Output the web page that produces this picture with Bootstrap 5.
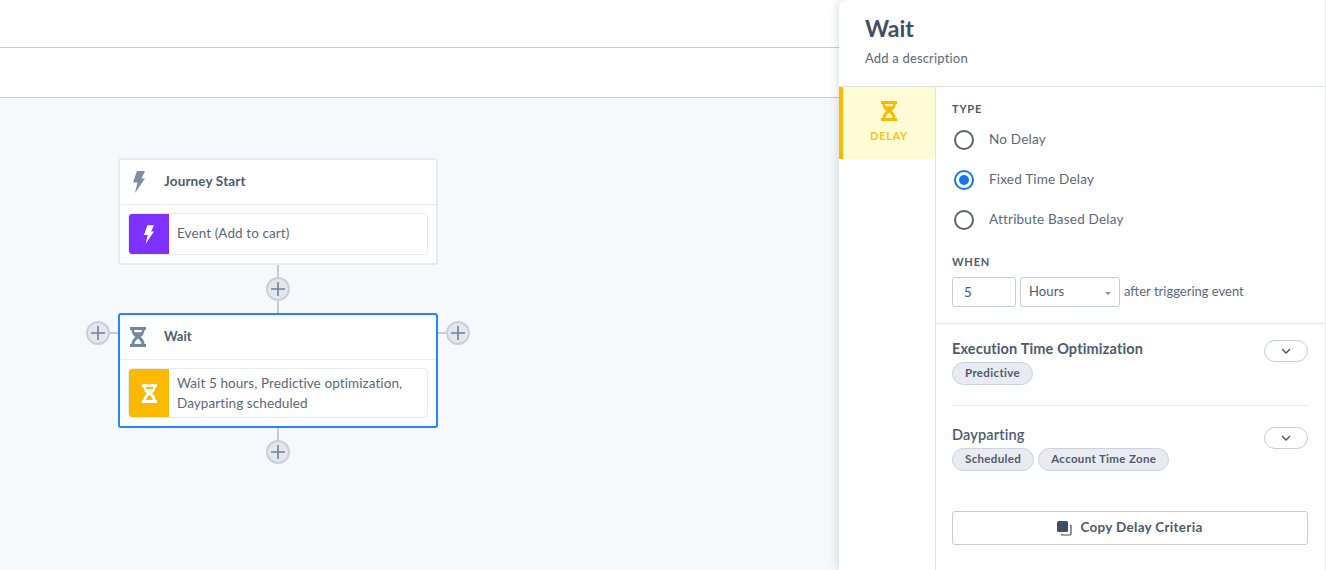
<!DOCTYPE html>
<html lang="en">
<head>
    <meta charset="UTF-8">
    <title>Wait</title>
    <link rel="stylesheet" href="https://cdn.jsdelivr.net/npm/bootstrap@5.3.0/dist/css/bootstrap.min.css">
    <style>
        html, body { height: 570px; overflow: hidden; }
        body { font-family: Lato, "Noto Sans", sans-serif; color: #4c5b70; background: #fff; }
        .page { height: 570px; }
        .left-side { width: 839px; }
        .top-bar { height: 48px; border-bottom: 1px solid #c6ccd4; }
        .sub-bar { height: 50px; border-bottom: 1px solid #c6ccd4; }
        .canvas { height: 472px; background: #f7f8fc; position: relative; }

        .node { position: absolute; left: 118px; width: 320px; background: #fff; border: 2px solid #e8eaf1; border-radius: 3px; }
        .node.start { top: 60px; height: 107px; }
        .node.wait { top: 215px; height: 115px; border-color: #2684ff; }
        .node-head { height: 45px; border-bottom: 1px solid #e8eaf1; padding-left: 10px; }
        .node-bolt { margin-left: 3px; color: #7d8ea3; }
        .node-title { font-size: 13.5px; font-weight: 700; letter-spacing: .15px; margin: 0 0 2px 19px; color: #4c5b70; }
        .wait .node-title { margin: 0 0 0 18px; font-size: 13px; letter-spacing: 0; }
        .node-box { margin: 8px 8px 0; border: 1px solid #e8eaf1; border-radius: 4px; overflow: hidden; font-size: 13.5px; line-height: 20px; letter-spacing: .09px; }
        .start .node-box { height: 42px; }
        .wait .node-box { height: 50px; }
        .node-tile { width: 40px; flex-shrink: 0; }
        .tile-purple { background: #7e30ff; }
        .tile-amber { background: #fbb900; }
        .node-text { padding: 0 0 2px 8px; color: #5a687c; }
        .wait .node-text { padding-bottom: 0; }

        .link-v { position: absolute; left: 277px; width: 2px; background: #c3ccd8; }
        .link-h { position: absolute; height: 2px; width: 10px; background: #c3ccd8; }
        .add-btn { position: absolute; width: 24px; height: 24px; border-radius: 50%; background: #e4e7ee; border: 2px solid #c9d0da; }

        .side-panel { width: 487px; background: #fff; border-top-left-radius: 8px; box-shadow: -2px 0 8px rgba(60, 70, 90, .16); border-right: 1px solid #eceef2; position: relative; }
        .panel-head { height: 87px; border-bottom: 1px solid #dfe2ea; padding: 13px 0 0 26px; }
        .panel-title { font-size: 23px; font-weight: 700; color: #3f4f63; line-height: 30px; margin: 0; }
        .panel-desc { font-size: 13px; line-height: 18px; margin-top: 6px; color: #5a687c; letter-spacing: .18px; }
        .panel-body { height: 483px; }
        .tab-col { width: 97px; border-right: 1px solid #dfe2ea; flex-shrink: 0; }
        .tab-item { height: 72px; background: #fffcd5; border-left: 4px solid #fbb900; padding-top: 14px; }
        .tab-label { font-size: 11px; font-weight: 700; letter-spacing: .7px; color: #fcc11a; line-height: 14px; margin-top: 8px; }
        .form-col { min-width: 0; }
        .type-block { padding: 15px 18px 0 16px; height: 237px; border-bottom: 1px solid #e6e8ee; }
        .field-label { font-size: 11px; font-weight: 700; letter-spacing: .8px; color: #4c5b70; line-height: 14px; }
        .radio-row { height: 40px; padding: 0 0 2px 2px; font-size: 13.5px; letter-spacing: .2px; color: #5a687c; }
        .radio-ring { width: 20px; height: 20px; margin: 2px 15px 0 0; border: 2px solid #5f6368; border-radius: 50%; flex-shrink: 0; }
        .radio-ring.on { border-color: #1a73e8; padding: 3px; }
        .radio-ring.on::after { content: ""; display: block; width: 10px; height: 10px; border-radius: 50%; background: #1a73e8; }
        .when-label { margin-top: 15px; margin-bottom: 8px; }
        .num-field { width: 64px; height: 30px; border: 1px solid #c6ccd8; border-radius: 3px; padding: 0 11px; font-size: 13.5px; line-height: 28px; }
        .select-field { width: 100px; height: 30px; margin-left: 4px; border: 1px solid #c6ccd8; border-radius: 3px; padding: 0 8px; font-size: 13px; letter-spacing: .1px; line-height: 26px; position: relative; }
        .select-field::after { content: ""; position: absolute; right: 8px; top: 14px; border: 3.5px solid transparent; border-top-color: #8a94a3; border-bottom: 0; }
        .after-text { font-size: 13px; margin-left: 4px; color: #5a687c; }
        .section { margin: 0 17px 0 16px; position: relative; }
        .section-first { height: 82px; padding-top: 15px; border-bottom: 1px solid #e9ebf0; }
        .section-second { padding-top: 19px; height: 105px; }
        .section-title { font-size: 14.5px; font-weight: 700; letter-spacing: .15px; line-height: 20px; color: #4c5b70; }
        .section-second .section-title { font-weight: 600; }
        .pill-row { margin-top: 3px; }
        .pill { height: 23px; padding: 0 12px; border: 1px solid #ccd2dc; border-radius: 12px; background: #e9ebf1; font-size: 11.5px; font-weight: 700; letter-spacing: .35px; line-height: 20px; color: #4c5b70; margin-right: 4px; }
        .chev-btn { position: absolute; right: 0; width: 44px; height: 22px; border: 1px solid #c6ccd8; border-radius: 11px; background: #fff; padding: 0; }
        .section-first .chev-btn { top: 16px; }
        .section-second .chev-btn { top: 21px; }
        .copy-btn { margin: 0 0 0 16px; width: 356px; height: 34px; border: 1px solid #c6ccd8; border-radius: 3px; background: #fff; font-size: 13.5px; font-weight: 700; letter-spacing: .3px; color: #4c5b70; padding: 0; }
        .copy-text { padding-bottom: 2px; }
    </style>
</head>
<body>
    <svg width="0" height="0" class="d-block">
        <defs>
            <symbol id="bolt" viewBox="0 0 12 22"><path d="M4 0h8L8.500 7.500H12L2 22l2.500-10.500H0z" fill="currentColor"/></symbol>
            <symbol id="glass" viewBox="0 0 16 20"><path fill-rule="evenodd" fill="currentColor" d="M0 0h16v3h-1.500c0 3.200-1.800 5.300-3.800 7 2 1.700 3.800 3.800 3.800 7H16v3H0v-3h1.500c0-3.200 1.800-5.300 3.800-7-2-1.700-3.800-3.800-3.800-7H0zM4 3c.1.800.3 1.500.6 2.200h6.800c.3-.7.500-1.400.6-2.200zM8 11.500c-2 1.500-3.300 3.200-3.500 5.500h7c-.2-2.300-1.500-4-3.500-5.500z"/></symbol>
            <symbol id="chev" viewBox="0 0 10 6"><path d="M1 1l4 4 4-4" fill="none" stroke="currentColor" stroke-width="1.300"/></symbol>
            <symbol id="plus" viewBox="0 0 14 14"><path d="M7 0v14M0 7h14" stroke="#6e829b" stroke-width="1.600"/></symbol>
        </defs>
    </svg>
    <div class="page d-flex">
        <div class="left-side d-flex flex-column">
            <div class="top-bar"></div>
            <div class="sub-bar"></div>
            <div class="canvas">
                <div class="node start">
                    <div class="node-head d-flex align-items-center">
                        <svg width="12" height="22" class="node-bolt"><use href="#bolt"/></svg>
                        <span class="node-title">Journey Start</span>
                    </div>
                    <div class="node-box d-flex">
                        <div class="node-tile tile-purple d-flex align-items-center justify-content-center text-white">
                            <svg width="10" height="19"><use href="#bolt"/></svg>
                        </div>
                        <div class="node-text d-flex align-items-center">Event (Add to cart)</div>
                    </div>
                </div>
                <div class="link-v" style="top:167px;height:48px"></div>
                <div class="add-btn d-flex align-items-center justify-content-center" style="left:266px;top:179px"><svg width="14" height="14"><use href="#plus"/></svg></div>

                <div class="node wait">
                    <div class="node-head d-flex align-items-center">
                        <svg width="16" height="20" style="color:#7287a0"><use href="#glass"/></svg>
                        <span class="node-title">Wait</span>
                    </div>
                    <div class="node-box d-flex">
                        <div class="node-tile tile-amber d-flex align-items-center justify-content-center text-white">
                            <svg width="15" height="19"><use href="#glass"/></svg>
                        </div>
                        <div class="node-text d-flex align-items-center"><span>Wait 5 hours, Predictive optimization,<br>Dayparting scheduled</span></div>
                    </div>
                </div>
                <div class="link-v" style="top:330px;height:12px"></div>
                <div class="add-btn d-flex align-items-center justify-content-center" style="left:266px;top:342px"><svg width="14" height="14"><use href="#plus"/></svg></div>
                <div class="link-h" style="left:108px;top:234px"></div>
                <div class="add-btn d-flex align-items-center justify-content-center" style="left:86px;top:223px"><svg width="14" height="14"><use href="#plus"/></svg></div>
                <div class="link-h" style="left:438px;top:234px"></div>
                <div class="add-btn d-flex align-items-center justify-content-center" style="left:446px;top:223px"><svg width="14" height="14"><use href="#plus"/></svg></div>
            </div>
        </div>

        <div class="side-panel">
            <div class="panel-head">
                <h1 class="panel-title">Wait</h1>
                <div class="panel-desc">Add a description</div>
            </div>
            <div class="panel-body d-flex">
                <div class="tab-col">
                    <div class="tab-item d-flex flex-column align-items-center" style="color:#fbb900">
                        <svg width="16" height="20"><use href="#glass"/></svg>
                        <div class="tab-label">DELAY</div>
                    </div>
                </div>
                <div class="form-col flex-grow-1">
                    <div class="type-block">
                        <div class="field-label mb-1">TYPE</div>
                        <div class="radio-row d-flex align-items-center"><span class="radio-ring"></span>No Delay</div>
                        <div class="radio-row d-flex align-items-center"><span class="radio-ring on"></span>Fixed Time Delay</div>
                        <div class="radio-row d-flex align-items-center"><span class="radio-ring"></span>Attribute Based Delay</div>
                        <div class="field-label when-label">WHEN</div>
                        <div class="d-flex align-items-center">
                            <div class="num-field">5</div>
                            <div class="select-field">Hours</div>
                            <span class="after-text">after triggering event</span>
                        </div>
                    </div>
                    <div class="section section-first">
                        <div class="section-title">Execution Time Optimization</div>
                        <button class="chev-btn" type="button"><svg width="10" height="6" class="d-block mx-auto" style="color:#3f4f63"><use href="#chev"/></svg></button>
                        <div class="d-flex pill-row"><span class="pill">Predictive</span></div>
                    </div>
                    <div class="section section-second">
                        <div class="section-title">Dayparting</div>
                        <button class="chev-btn" type="button"><svg width="10" height="6" class="d-block mx-auto" style="color:#3f4f63"><use href="#chev"/></svg></button>
                        <div class="d-flex pill-row"><span class="pill">Scheduled</span><span class="pill">Account Time Zone</span></div>
                    </div>
                    <button class="copy-btn d-flex align-items-center justify-content-center" type="button">
                        <svg width="15" height="15" viewBox="0 0 15 15" class="me-2"><rect x="0" y="0" width="11" height="11" rx="1.500" fill="#3f4f63"/><path d="M13 4.500h1v8.500a1 1 0 0 1-1 1H5v-1.200" fill="none" stroke="#3f4f63" stroke-width="1.200"/></svg>
                        <span class="copy-text">Copy Delay Criteria</span>
                    </button>
                </div>
            </div>
        </div>
    </div>
    <script src="https://cdn.jsdelivr.net/npm/bootstrap@5.3.0/dist/js/bootstrap.bundle.min.js"></script>
</body>
</html>
